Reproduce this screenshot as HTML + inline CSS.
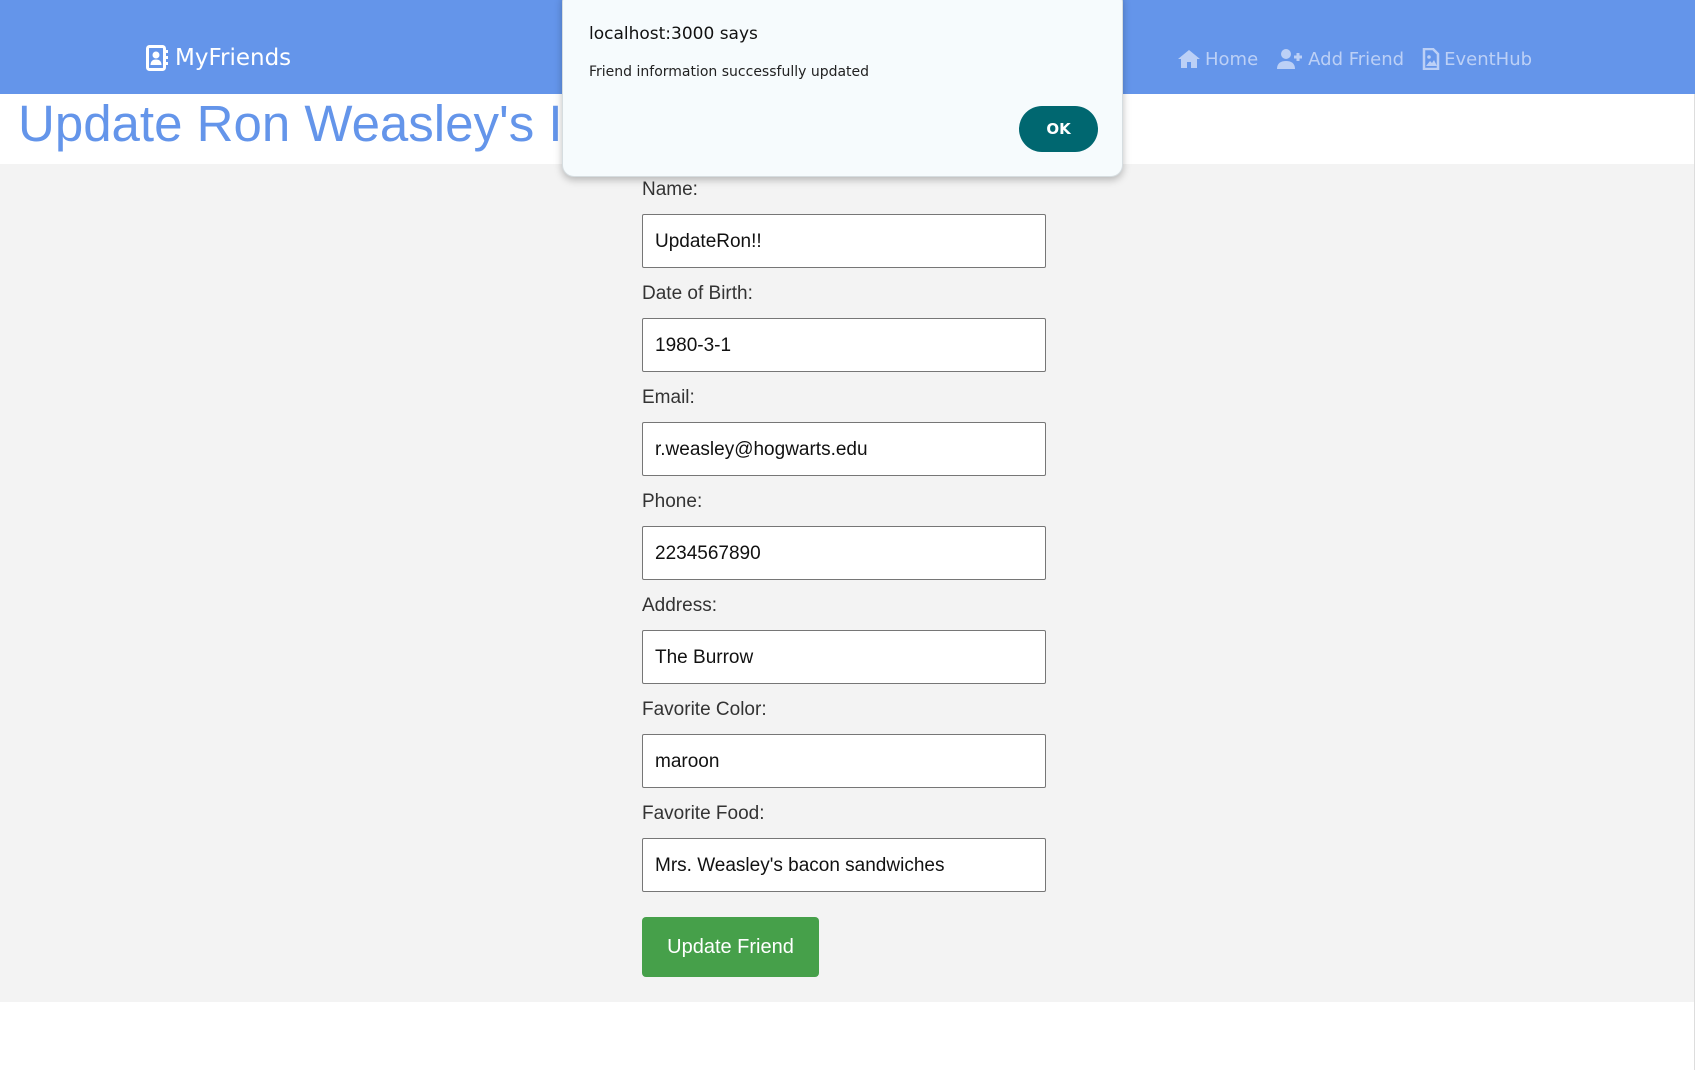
<!DOCTYPE html>
<html><head><meta charset="utf-8"><style>
*{box-sizing:border-box;margin:0;padding:0}
body{width:1695px;height:1070px;background:#fff;font-family:"Liberation Sans",Arial,sans-serif;position:relative;overflow:hidden}
.nav{position:absolute;left:0;top:0;width:1695px;height:94px;background:#6495ea}
.brand{position:absolute;left:146px;top:45px;color:#fff;font-family:"DejaVu Sans","Liberation Sans",sans-serif;font-size:23px;display:flex;align-items:center;gap:7px}
.links{position:absolute;left:1177px;top:48px;color:#bcd0f6;font-family:"DejaVu Sans","Liberation Sans",sans-serif;font-size:18px;display:flex;gap:18px;align-items:center}
.links span{display:flex;align-items:center;gap:4px}
.title{position:absolute;left:18px;top:94px;color:#6495ea;font-size:51px;line-height:60px;white-space:nowrap}
.gray{position:absolute;left:0;top:164px;width:1695px;height:838px;background:#f3f3f3}
.lbl{position:absolute;left:642px;color:#333;font-size:19px}
.inp{position:absolute;left:642px;width:404px;height:54px;background:#fff;border:1px solid #767676;border-radius:2px;font-size:19px;color:#111;padding-left:12px;line-height:53px}
.btn{position:absolute;left:642px;top:917px;width:177px;height:60px;background:#46a04a;border-radius:4px;color:#fff;font-size:20px;text-align:center;line-height:60px}
.dlg{position:absolute;left:562px;top:-10px;width:561px;height:187px;background:#f6fbfd;border:1px solid #d6dde0;border-radius:12px;box-shadow:0 3px 8px rgba(0,0,0,.25)}
.dt{position:absolute;left:26px;top:33px;font-family:"DejaVu Sans","Liberation Sans",sans-serif;font-size:17px;color:#111}
.dm{position:absolute;left:26px;top:73px;font-family:"DejaVu Sans","Liberation Sans",sans-serif;font-size:14px;color:#222}
.ok{position:absolute;left:456px;top:115px;width:79px;height:46px;border-radius:23px;background:#006770;color:#fff;font-weight:bold;font-size:15px;text-align:center;line-height:46px;font-family:"DejaVu Sans",sans-serif}
.sb{position:absolute;left:1694px;top:94px;width:1px;height:976px;background:#ddd}
</style></head><body>
<div class="nav">
 <div class="brand"><svg width="22" height="26" viewBox="0 0 22 26"><rect x="1.5" y="1.5" width="17" height="23" rx="2" fill="none" stroke="#fff" stroke-width="3"/><circle cx="10" cy="10" r="3.5" fill="#fff"/><path d="M4.5 20c0-4 2.5-5.5 5.5-5.5s5.5 1.5 5.5 5.5z" fill="#fff"/><rect x="19" y="5" width="3" height="3" fill="#fff"/><rect x="19" y="11" width="3" height="3" fill="#fff"/><rect x="19" y="17" width="3" height="3" fill="#fff"/></svg>MyFriends</div>
 <div class="links">
  <span><svg width="24" height="20" viewBox="0 0 24 20"><path d="M12 1L1 10h3v9h6v-6h4v6h6v-9h3z" fill="#bcd0f6"/></svg>Home</span>
  <span><svg width="28" height="22" viewBox="0 0 28 22"><circle cx="10" cy="6" r="5" fill="#bcd0f6"/><path d="M1 21c0-6 4-8 9-8s9 2 9 8z" fill="#bcd0f6"/><path d="M22 5v8M18 9h8" stroke="#bcd0f6" stroke-width="3"/></svg>Add Friend</span>
  <span><svg width="18" height="22" viewBox="0 0 18 22"><path d="M2 1h9l5 5v15H2z" fill="none" stroke="#bcd0f6" stroke-width="2.5"/><circle cx="7" cy="9" r="1.8" fill="#bcd0f6"/><path d="M4 18l4-5 2 2 2-3 3 6z" fill="#bcd0f6"/></svg>EventHub</span>
 </div>
</div>
<div class="title">Update Ron Weasley's Information</div>
<div class="gray"></div>
<div class="lbl" style="top:179px">Name:</div><div class="inp" style="top:214px">UpdateRon!!</div>
<div class="lbl" style="top:283px">Date of Birth:</div><div class="inp" style="top:318px">1980-3-1</div>
<div class="lbl" style="top:387px">Email:</div><div class="inp" style="top:422px">r.weasley@hogwarts.edu</div>
<div class="lbl" style="top:491px">Phone:</div><div class="inp" style="top:526px">2234567890</div>
<div class="lbl" style="top:595px">Address:</div><div class="inp" style="top:630px">The Burrow</div>
<div class="lbl" style="top:699px">Favorite Color:</div><div class="inp" style="top:734px">maroon</div>
<div class="lbl" style="top:803px">Favorite Food:</div><div class="inp" style="top:838px">Mrs. Weasley's bacon sandwiches</div>
<div class="btn">Update Friend</div>
<div class="sb"></div>
<div class="dlg"><div class="dt">localhost:3000 says</div><div class="dm">Friend information successfully updated</div><div class="ok">OK</div></div>
</body></html>
